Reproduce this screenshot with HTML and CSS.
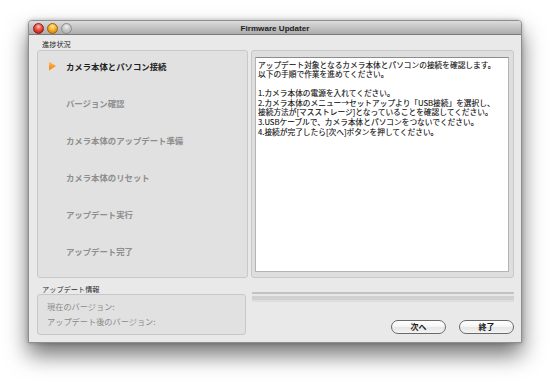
FILE: index.html
```html
<!DOCTYPE html>
<html lang="ja">
<head>
<meta charset="utf-8">
<title>Firmware Updater</title>
<link rel="stylesheet" href="styles.css">
</head>
<body>
<div class="window">
  <div class="titlebar">
    <div class="lights">
      <span class="light red"></span>
      <span class="light yellow"></span>
      <span class="light gray"></span>
    </div>
    <div class="title">Firmware Updater</div>
    <div></div>
  </div>
  <div class="content">
    <div class="top">
      <div class="group-label">進捗状況</div>
      <div></div>
      <div class="steps">
        <div class="step active"><span class="arrow"></span><span>カメラ本体とパソコン接続</span></div>
        <div class="step"><span class="arrow"></span><span>バージョン確認</span></div>
        <div class="step"><span class="arrow"></span><span>カメラ本体のアップデート準備</span></div>
        <div class="step"><span class="arrow"></span><span>カメラ本体のリセット</span></div>
        <div class="step"><span class="arrow"></span><span>アップデート実行</span></div>
        <div class="step"><span class="arrow"></span><span>アップデート完了</span></div>
      </div>
      <div class="message-box">
        <div class="message">アップデート対象となるカメラ本体とパソコンの接続を確認します。<br>以下の手順で作業を進めてください。<br><br>1.カメラ本体の電源を入れてください。<br>2.カメラ本体のメニュー→セットアップより「USB接続」を選択し、<br>接続方法が[マスストレージ]となっていることを確認してください。<br>3.USBケーブルで、カメラ本体とパソコンをつないでください。<br>4.接続が完了したら[次へ]ボタンを押してください。</div>
      </div>
    </div>
    <div class="bottom">
      <div class="info">
        <div class="group-label info-label">アップデート情報</div>
        <div class="info-box">
          <div>現在のバージョン:</div>
          <div>アップデート後のバージョン:</div>
        </div>
      </div>
      <div class="actions">
        <div class="progress"></div>
        <div class="buttons">
          <button class="btn">次へ</button>
          <button class="btn">終了</button>
        </div>
      </div>
    </div>
  </div>
</div>
</body>
</html>
```

FILE: styles.css
```css
html, body {
  margin: 0;
  padding: 0;
  background: #ffffff;
}

body {
  font-family: "Noto Sans CJK JP", "Liberation Sans", sans-serif;
  min-height: 386px;
}

.window {
  box-sizing: border-box;
  margin: 20px 0 0 28px;
  width: 494px;
  height: 323px;
  background: #e9e9e9;
  border: 1px solid #8e8e8e;
  border-radius: 4px 4px 0 0;
  box-shadow: 0 12px 22px rgba(0, 0, 0, 0.55), 0 0 4px rgba(0, 0, 0, 0.25);
  display: flex;
  flex-direction: column;
  overflow: hidden;
}

.titlebar {
  height: 13px;
  border-bottom: 1px solid #7a7a7a;
  background: linear-gradient(to bottom, #dcdcdc 0%, #c6c6c6 45%, #acacac 100%);
  display: grid;
  grid-template-columns: 1fr auto 1fr;
  align-items: center;
}

.lights {
  display: flex;
  align-items: center;
  gap: 3px;
  padding-left: 4px;
}

.light {
  box-sizing: border-box;
  width: 11px;
  height: 11px;
  border-radius: 50%;
}

.light.red {
  background: radial-gradient(circle at 50% 30%, #ffc2b8 0%, #f0584c 38%, #c8261a 75%, #9a140c 100%);
  border: 1px solid #8a2018;
}

.light.yellow {
  background: radial-gradient(circle at 50% 30%, #ffe9a8 0%, #f8b834 40%, #de8a0c 78%, #b06800 100%);
  border: 1px solid #9a6410;
}

.light.gray {
  background: radial-gradient(circle at 50% 30%, #f0f0f0 0%, #c8c8c8 45%, #a8a8a8 100%);
  border: 1px solid #8e8e8e;
}

.title {
  font-family: "Liberation Sans", Arial, sans-serif;
  font-weight: bold;
  font-size: 8.1px;
  line-height: 13px;
  color: #1c1c1c;
  padding-top: 1px;
}

.content {
  flex: 1;
  display: flex;
  flex-direction: column;
  padding: 0 7px 0 8px;
}

.top {
  display: grid;
  grid-template-columns: 211px 263px;
  grid-template-rows: 15px 228px;
  column-gap: 3px;
}

.group-label {
  font-size: 7.2px;
  line-height: 11px;
  padding: 4px 0 0 5px;
  color: #2a2a2a;
}

.steps {
  box-sizing: border-box;
  background: #e1e1e1;
  border: 1px solid #c8c8c8;
  border-radius: 3px;
  padding: 9px 0 0 11px;
  display: flex;
  flex-direction: column;
  gap: 25px;
}

.step {
  display: flex;
  align-items: center;
  height: 12px;
  font-size: 8.4px;
  font-weight: bold;
  color: #8d8d8d;
}

.step .arrow {
  width: 7px;
  height: 9px;
  margin-right: 10px;
  flex: none;
  visibility: hidden;
  clip-path: polygon(0 0, 100% 50%, 0 100%);
  background: linear-gradient(to bottom, #ffc070 0%, #f79a26 50%, #ee8410 100%);
}

.step.active {
  color: #1e1e1e;
}

.step.active .arrow {
  visibility: visible;
}

.message-box {
  box-sizing: border-box;
  background: #dedede;
  border: 1px solid #c8c8c8;
  border-radius: 3px;
  padding: 6px 4px 5px 3px;
  display: flex;
}

.message {
  flex: 1;
  background: #ffffff;
  border: 1px solid #b4b4b4;
  border-top-color: #8c8c8c;
  padding: 1.5px 2px 0 2px;
  font-size: 7.7px;
  line-height: 9.6px;
  color: #111111;
  -webkit-text-stroke: 0.12px currentColor;
  white-space: nowrap;
  overflow: hidden;
}

.bottom {
  display: grid;
  grid-template-columns: 209px 262px;
  column-gap: 6px;
  height: 64px;
}

.info {
  display: flex;
  flex-direction: column;
}

.info-label {
  height: 16px;
  box-sizing: border-box;
  padding-top: 5px;
  line-height: 12px;
}

.info-box {
  box-sizing: border-box;
  height: 41px;
  background: #e1e1e1;
  border: 1px solid #c8c8c8;
  border-radius: 3px;
  padding: 4px 0 0 9px;
  font-size: 8.2px;
  line-height: 15px;
  color: #8a8a8a;
}

.actions {
  display: flex;
  flex-direction: column;
  padding-top: 14px;
}

.progress {
  height: 10px;
  background: linear-gradient(to bottom,
    #c2c2c2 0px, #c2c2c2 2px,
    #e7e7e7 2px, #e7e7e7 4px,
    #d1d1d1 4px, #d1d1d1 8.5px,
    #dedede 8.5px, #dedede 10px);
}

.buttons {
  margin-top: 18px;
  display: flex;
  justify-content: flex-end;
  gap: 13px;
}

.btn {
  box-sizing: border-box;
  width: 55px;
  height: 14px;
  padding: 0;
  border: 1px solid #6a6a6a;
  border-radius: 7px;
  background: linear-gradient(to bottom, #ffffff 0%, #f6f6f6 45%, #e6e6e6 55%, #f4f4f4 100%);
  font-family: "Noto Sans CJK JP", sans-serif;
  font-size: 8px;
  font-weight: bold;
  line-height: 12px;
  color: #1a1a1a;
}
```
